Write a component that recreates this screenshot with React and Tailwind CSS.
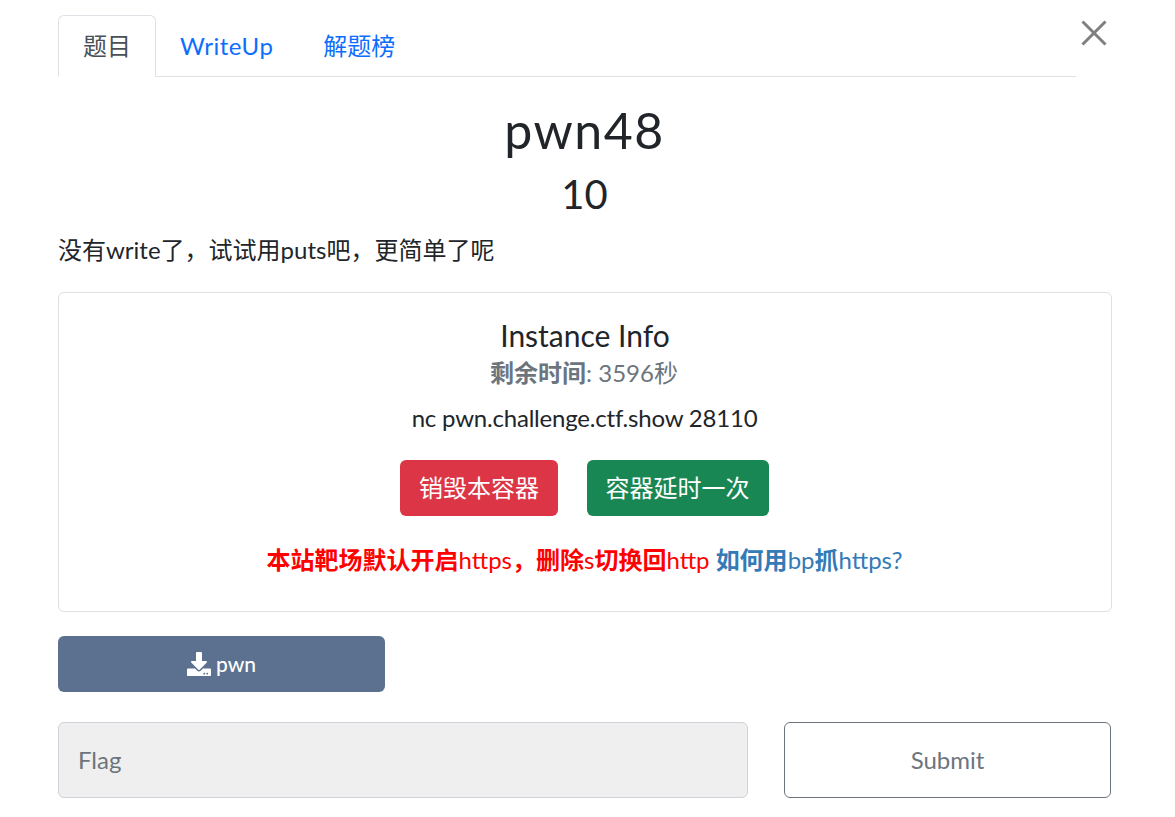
import React from "react";
import { FaDownload } from "react-icons/fa";
export default function App() {
  return (
    <div className="relative h-[817px] w-[1175px] overflow-hidden bg-white pl-[58px] pr-[63px] pt-[15px] text-[#212529] font-['Lato','Noto_Sans_CJK_SC',sans-serif]">
      <button className="absolute left-[1081px] top-[20px] h-[26px] w-[26px] text-[#7f7f7f]">
        <svg viewBox="0 0 26 26" className="h-[26px] w-[26px]" fill="none" stroke="currentColor" strokeWidth="3"><path d="M1.5 1.5 24.5 24.5M24.5 1.5 1.5 24.5" /></svg>
      </button>
      <div className="flex h-[62px] w-[1018px] border-b border-[#dee2e6] text-[24px]">
        <div className="flex h-[62px] w-[98px] items-center justify-center rounded-t-md border border-b-white border-[#dee2e6] bg-white text-[#495057]">题目</div>
        <div className="flex h-[61px] items-center pl-[24px] tracking-[0.5px] text-[#0d6efd]">WriteUp</div>
        <div className="flex h-[61px] items-center pl-[50px] text-[#0d6efd]">解题榜</div>
      </div>
      <h1 className="mt-[23px] pr-[1px] text-center text-[50px] leading-[60px] tracking-[1.5px]">pwn48</h1>
      <h2 className="mt-[10px] pr-[1px] text-center text-[40px] leading-[48px]">10</h2>
      <p className="mt-[14px] text-[24px] leading-[36px]">没有write了，试试用puts吧，更简单了呢</p>
      <div className="mt-[24px] flex h-[320px] flex-col items-center rounded-md border border-[#dfdfdf] pt-[20px]">
        <div className="text-[30px] leading-[44px]">Instance Info</div>
        <div className="mt-[1px] pr-[2px] text-[24px] leading-[30px] text-[#6c757d]"><b>剩余时间</b>: 3596秒</div>
        <div className="mt-[12px] pr-[1px] text-[24px] leading-[36px] tracking-[-0.2px]">nc pwn.challenge.ctf.show 28110</div>
        <div className="mt-[24px] flex gap-[29px] pr-[2px] text-[24px] text-white">
          <div className="flex h-[56px] w-[158px] items-center justify-center rounded-md bg-[#dc3545]"><span className="pl-[1px]">销毁本容器</span></div>
          <div className="flex h-[56px] w-[182px] items-center justify-center rounded-md bg-[#198754]">容器延时一次</div>
        </div>
        <div className="mt-[26px] pr-[1px] text-[24px] leading-[36px] text-[#ff0000]"><b>本站靶场默认开启</b>https<b>，删除</b>s<b>切换回</b>http <span className="text-[#337ab7]"><b>如何用</b>bp<b>抓</b>https?</span></div>
      </div>
      <button className="mt-[24px] flex h-[56px] w-[327px] items-center justify-center gap-[5px] rounded-md bg-[#5c718f] text-[21px] font-medium text-white">
        <FaDownload className="h-[24px] w-[24px]" />
        pwn
      </button>
      <div className="mt-[30px] flex gap-[36px]">
        <div className="flex h-[76px] w-[690px] items-center rounded-md border border-[#ced4da] bg-[#efefef] pl-[19px] text-[24px] text-[#6c757d]">Flag</div>
        <div className="flex h-[76px] w-[327px] items-center justify-center rounded-md border border-[#6c757d] text-[24px] text-[#6c757d]">Submit</div>
      </div>
    </div>
  );
}
